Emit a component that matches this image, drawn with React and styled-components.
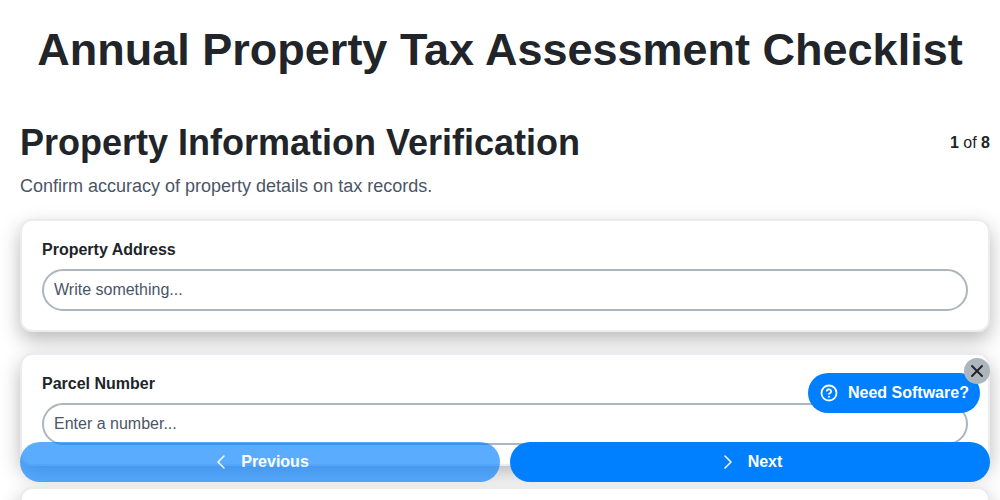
import React from 'react';
import styled, { createGlobalStyle } from 'styled-components';
import { ChevronLeft, ChevronRight, CircleHelp, X } from 'lucide-react';

const GlobalStyle = createGlobalStyle`
  html, body {
    margin: 0;
    padding: 0;
    height: 100%;
    overflow: hidden;
    background: #fff;
  }
  * {
    box-sizing: border-box;
  }
`

const Page = styled.div`
  height: 500px;
  overflow: hidden;
  color: #212529;
  font-family: 'Liberation Sans', Arial, sans-serif;
`

const Title = styled.h1`
  margin: 0;
  padding-top: 23px;
  height: 102px;
  font-size: 45px;
  line-height: 54px;
  font-weight: 700;
  text-align: center;
`

const Content = styled.main`
  padding: 0 10px 0 20px;
`

const SectionHeader = styled.div`
  display: flex;
  justify-content: space-between;
  align-items: flex-start;
`

const SectionTitle = styled.h2`
  margin: 0;
  padding-top: 19px;
  font-size: 36px;
  line-height: 43px;
  font-weight: 700;
`

const Counter = styled.div`
  padding-top: 31px;
  font-size: 16px;
  line-height: 19px;

  b {
    font-weight: 700;
  }
`

const Subtitle = styled.p`
  margin: 11px 0 22px;
  font-size: 18px;
  line-height: 22px;
  color: #4a5568;
`

const CardList = styled.div`
  display: flex;
  flex-direction: column;
  gap: 21px;
`

const Card = styled.section`
  flex: none;
  height: 113px;
  padding: 20px;
  background: #fff;
  border: 2px solid #ececf0;
  border-radius: 12px;
  box-shadow: 0 8px 20px rgba(0, 0, 0, 0.28);
`

const Label = styled.label`
  display: block;
  margin-bottom: 10px;
  font-size: 16px;
  line-height: 18px;
  font-weight: 700;
`

const Field = styled.input`
  display: block;
  width: 100%;
  height: 42px;
  padding: 0 10px;
  border: 2px solid #adb5bd;
  border-radius: 21px;
  background: #fff;
  outline: none;
  font-family: inherit;
  font-size: 16px;

  &::placeholder {
    color: #4a5568;
    opacity: 1;
  }
`

const NavBar = styled.nav`
  position: fixed;
  left: 20px;
  right: 10px;
  bottom: 18px;
  display: flex;
  gap: 10px;
`

const NavButton = styled.button`
  flex: 1;
  display: flex;
  align-items: center;
  justify-content: center;
  gap: 8px;
  height: 40px;
  padding: 0 2px 0 0;
  border: 0;
  border-radius: 20px;
  background: #0080ff;
  color: #fff;
  opacity: ${(props) => (props.$faded ? 0.65 : 1)};
  font-family: inherit;
  font-size: 16px;
  font-weight: 700;
`

const HelpBubble = styled.button`
  position: fixed;
  left: 808px;
  top: 373px;
  display: flex;
  align-items: center;
  gap: 10px;
  width: 172px;
  height: 40px;
  padding: 0 0 0 12px;
  border: 0;
  border-radius: 20px;
  background: #0080ff;
  color: #fff;
  font-family: inherit;
  font-size: 16px;
  font-weight: 700;
`

const CloseButton = styled.button`
  position: fixed;
  left: 964px;
  top: 358px;
  display: flex;
  align-items: center;
  justify-content: center;
  width: 26px;
  height: 26px;
  padding: 0;
  border: 0;
  border-radius: 50%;
  background: #adb5bd;
  color: #212529;
`

const App = () => {
  return (
    <Page>
      <GlobalStyle />
      <Title>Annual Property Tax Assessment Checklist</Title>
      <Content>
        <SectionHeader>
          <SectionTitle>Property Information Verification</SectionTitle>
          <Counter>
            <b>1</b> of <b>8</b>
          </Counter>
        </SectionHeader>
        <Subtitle>Confirm accuracy of property details on tax records.</Subtitle>
        <CardList>
          <Card>
            <Label>Property Address</Label>
            <Field placeholder="Write something..." />
          </Card>
          <Card>
            <Label>Parcel Number</Label>
            <Field placeholder="Enter a number..." />
          </Card>
          <Card />
        </CardList>
      </Content>
      <NavBar>
        <NavButton $faded>
          <ChevronLeft size={24} strokeWidth={1.5} />
          Previous
        </NavButton>
        <NavButton>
          <ChevronRight size={24} strokeWidth={1.5} />
          Next
        </NavButton>
      </NavBar>
      <HelpBubble>
        <CircleHelp size={18} strokeWidth={2.4} />
        Need Software?
      </HelpBubble>
      <CloseButton>
        <X size={20} strokeWidth={2.3} />
      </CloseButton>
    </Page>
  );
};

export default App;
